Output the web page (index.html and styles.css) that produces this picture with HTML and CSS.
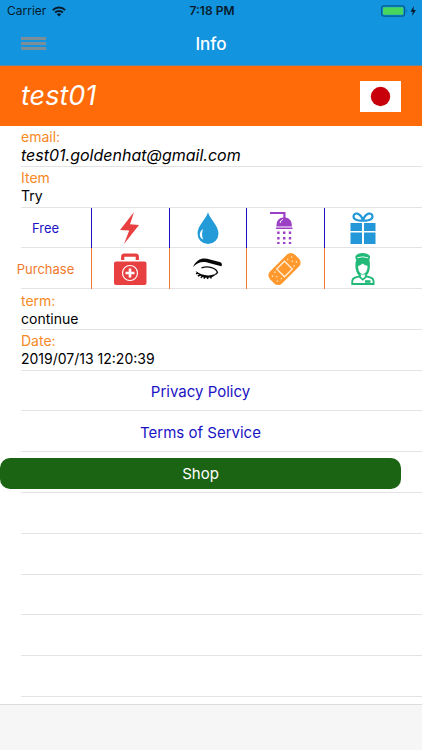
FILE: index.html
```html
<!DOCTYPE html>
<html lang="en">
<head>
<meta charset="utf-8">
<meta name="viewport" content="width=device-width, initial-scale=1">
<title>Info</title>
<link rel="stylesheet" href="styles.css">
</head>
<body>
<header class="top">
  <div class="status">
    <span class="carrier">Carrier
      <svg width="14" height="11" viewBox="0 0 14 11" aria-hidden="true"><g fill="none" stroke="#071b2b" stroke-width="2"><path d="M.8 4.1a8.8 8.8 0 0 1 12.4 0M3.1 6.5a5.5 5.5 0 0 1 7.8 0"/></g><path d="M4.8 8.3a3.1 3.1 0 0 1 4.4 0L7 10.6z" fill="#071b2b"/></svg>
    </span>
    <span class="clock">7:18 PM</span>
    <span class="power">
      <svg width="36" height="12" viewBox="0 0 36 12" aria-hidden="true"><rect x=".6" y=".8" width="23" height="10.4" rx="2.4" fill="none" stroke="#075b91" stroke-width="1.2"/><rect x="2" y="2.2" width="20.2" height="7.6" rx="1" fill="#47d65b"/><path d="M25 4.2q1.6 1.8 0 3.6z" fill="#075b91"/><path d="M32.8 1 29.5 6.7h2.3L31 11l4-5.9h-2.5z" fill="#071b2b"/></svg>
    </span>
  </div>
  <div class="nav">
    <button class="menu" type="button" aria-label="Menu"><span></span><span></span><span></span></button>
    <h1 class="nav-title">Info</h1>
  </div>
</header>
<section class="profile">
  <h2 class="name">test01</h2>
  <svg class="flag" width="41" height="31" viewBox="0 0 41 31" role="img" aria-label="Japan"><path fill="#fff" d="M0 0h41v31H0z"/><circle cx="20.5" cy="15.5" r="9.7" fill="#c7000b"/></svg>
</section>
<main class="list">
  <div class="row field"><span class="label">email:</span><span class="value email">test01.goldenhat@gmail.com</span></div>
  <div class="row field"><span class="label">Item</span><span class="value">Try</span></div>
  <div class="row items free">
    <span class="cell kind">Free</span>
    <span class="cell"><svg class="icon" viewBox="0 0 32 32"><path fill="#e83f40" d="M20 0 6 18l9.2.6L10 32l15-19-9-.8z"/></svg></span>
    <span class="cell"><svg class="icon" viewBox="0 0 32 32"><path fill="#239bd8" d="M16 0c1 6 10.500 13.500 10.500 21.500a10.500 10.500 0 0 1-21 0C5.500 13.500 15 6 16 0z"/><path fill="#fff" d="M11 17c-4.500 3-4 9 .3 10.600-1.800-3.600-1.400-7-.3-10.600z"/></svg></span>
    <span class="cell"><svg class="icon" viewBox="0 0 32 32"><g fill="#9b3fc5"><path d="M1 0h15.500v5.500a7 7 0 0 1 6.300 7.500v1.500H7.500V13a7 7 0 0 1 6.800-7.500V2H1zM7 15.500h16.500V17H7z"/><path d="M8.200 19.500h2.400v2.400H8.200zM14 19.500h2.400v2.400H14zM19.800 19.500h2.400v2.400h-2.400zM8.200 25h2.400v2.400H8.200zM14 25h2.400v2.400H14zM19.800 25h2.400v2.400h-2.400zM8.200 30h2.400v2H8.200zM14 30h2.400v2H14zM19.800 30h2.400v2h-2.400z"/></g><path d="M11 11q.4-2.600 2.800-3.500" fill="none" stroke="#fff" stroke-width="1"/></svg></span>
    <span class="cell"><svg class="icon" viewBox="0 0 32 32"><path fill="#2397d7" d="M3.500 11H15v8H3.500zM17 11h11.500v8H17zM3.500 20.500H15V32H3.500zM17 20.500h11.500V32H17z"/><path fill="none" stroke="#2397d7" stroke-width="2.200" d="M16 8.500C12 9 6.500 8 6.500 4.500 6.500 0 13.500 0 16 8.500zM16 8.500c4 .5 9.500-.5 9.500-4C25.500 0 18.500 0 16 8.500z"/></svg></span>
  </div>
  <div class="row items purchase">
    <span class="cell kind">Purchase</span>
    <span class="cell"><svg class="icon" viewBox="0 0 32 32"><path fill="none" stroke="#e83f40" stroke-width="3.200" d="M8.700 7V3.600q0-1.500 1.500-1.500h11.600q1.500 0 1.500 1.500V7"/><rect y="8.500" width="32.500" height="23.500" rx="2" fill="#e83f40"/><circle cx="16" cy="20" r="7.500" fill="none" stroke="#fff" stroke-width="1.200"/><path stroke="#fff" stroke-width="2.600" d="M16 15.500v9M11.500 20h9"/></svg></span>
    <span class="cell"><svg class="icon" viewBox="0 0 32 32"><path fill="#080808" d="M1 14C5 6 10.500 4.300 18 6.500l10.500 2.800q2.500 1.700.8 4L18 10.300C11 7.800 6.500 8.500 1 14z"/><path fill="#080808" d="M3.500 18c6 4.500 14 6 21.500 2.300-5 6.500-15.500 6.300-21.500-2.300z"/><path fill="none" stroke="#080808" stroke-width="1.300" d="M9.500 14.800c7-2.300 14.500.2 16 4.700l-2 2"/><path fill="none" stroke="#080808" stroke-width="1.500" d="m6 20-2 .8M8 22l-2.200 1.200M10.500 23.300l-1.700 1.500M13 24l-1.200 1.600M16 24l-.6 1.900M19 24v1.600"/></svg></span>
    <span class="cell"><svg class="icon" viewBox="0 0 32 32"><g transform="rotate(-45 15.500 16)"><rect x="-2" y="7.500" width="35" height="17" rx="5.500" fill="#ff982d"/><rect x="10" y="10.500" width="11" height="11" fill="none" stroke="#fff0dc" stroke-width="1.300"/><g fill="#ffe1b9"><circle cx="2" cy="12.500" r=".8"/><circle cx="2" cy="19.500" r=".8"/><circle cx="4.500" cy="16" r=".8"/><circle cx="6.500" cy="11.500" r=".8"/><circle cx="6.500" cy="20.500" r=".8"/><circle cx="24.500" cy="11.500" r=".8"/><circle cx="24.500" cy="20.500" r=".8"/><circle cx="26.500" cy="16" r=".8"/><circle cx="29" cy="12.500" r=".8"/><circle cx="29" cy="19.500" r=".8"/></g></g></svg></span>
    <span class="cell"><svg class="icon" viewBox="0 0 32 32"><path fill="#20b978" d="M9.300 7C8.500 5.500 8 4.500 8.500 3.200 9.500 1 12.500 0 15.500 0s6.500 1 7.500 3.200c.4 1.300-.2 2.300-.8 3.800 1 2 1 8-.2 11.500-.8 3-3.200 5-6.300 5s-5.500-2-6.300-5C8 15 8.200 9 9.300 7z"/><path d="M10.300 4.800q5.200-2 11 0" fill="none" stroke="#fff" stroke-width=".9"/><path fill="#fff" d="M11.200 13c1.800-.3 3.300-1.200 4.300-2.400 1.500 1.200 3 1.900 5 2.200.2 4.400-1.600 8.200-4.700 8.200s-4.800-3.700-4.600-8z"/><path fill="#fff" stroke="#20b978" stroke-width="1.800" d="M13 21.500V23l-5 1.700q-2.800 1-2.800 4V31h21.400v-2.300q0-3-2.800-4l-5-1.700v-1.500"/><path fill="none" stroke="#20b978" stroke-width="1.700" d="m12 23.300 3.800 3.300 3.800-3.300"/><path fill="#20b978" d="M18 27.200h5.500v2.600H18z"/></svg></span>
  </div>
  <div class="row field"><span class="label">term:</span><span class="value">continue</span></div>
  <div class="row field"><span class="label">Date:</span><span class="value">2019/07/13 12:20:39</span></div>
  <div class="row action"><a class="link" href="#privacy">Privacy Policy</a></div>
  <div class="row action"><a class="link" href="#terms">Terms of Service</a></div>
  <div class="row action"><button class="shop" type="button">Shop</button></div>
  <div class="row"></div>
  <div class="row"></div>
  <div class="row"></div>
  <div class="row"></div>
  <div class="row"></div>
</main>
<footer class="toolbar"></footer>
</body>
</html>
```
FILE: styles.css
```css
* { box-sizing: border-box; }

body {
  margin: 0;
  min-height: 100vh;
  display: flex;
  flex-direction: column;
  background: #fff;
  color: #000;
  font-family: Inter, "Liberation Sans", sans-serif;
  font-size: 14px;
  line-height: 18px;
}

h1, h2 { margin: 0; }

button {
  border: 0;
  padding: 0;
  font: inherit;
}

.top {
  background: #1394df;
  border-bottom: 1px solid #5f88a0;
}

.status {
  display: grid;
  grid-template-columns: 1fr auto 1fr;
  align-items: center;
  height: 22px;
  padding: 0 5px 0 7px;
  color: #071b2b;
  font-size: 12px;
}

.carrier {
  display: flex;
  align-items: center;
  gap: 6px;
}

.clock { font-weight: 600; }

.power {
  display: flex;
  justify-content: flex-end;
}

.nav {
  display: grid;
  grid-template-columns: 1fr auto 1fr;
  align-items: center;
  height: 43px;
  padding: 0 21px;
}

.menu {
  display: flex;
  flex-direction: column;
  gap: 2px;
  width: 25px;
  background: none;
}

.menu span {
  height: 3px;
  background: #7c8f99;
}

.nav-title {
  color: #fff;
  font-size: 17px;
  font-weight: 500;
  line-height: 22px;
}

.profile {
  display: flex;
  align-items: center;
  justify-content: space-between;
  height: 60px;
  padding: 0 21px;
  background: #ff6b08;
}

.name {
  color: #fff;
  font-size: 27px;
  font-style: italic;
  font-weight: 400;
  line-height: 34px;
}

.list {
  flex: 1;
  display: grid;
  grid-template-rows: repeat(14, minmax(40px, 1fr));
  padding-bottom: 7px;
}

/* Row divider, inset from the left edge */
.row {
  background: linear-gradient(#e3e3e5, #e3e3e5) 21px 100% / 100% 1px no-repeat;
}

.field {
  display: flex;
  flex-direction: column;
  justify-content: center;
  padding: 0 21px;
}

.label { color: #f58a24; }

.email {
  font-size: 16px;
  font-style: italic;
}

.items {
  display: grid;
  grid-template-columns: 91px repeat(4, 1fr);
  padding-right: 21px;
}

.cell {
  display: flex;
  align-items: center;
  justify-content: center;
}

.cell + .cell { border-left: 1px solid; }

.free { color: #1a13c4; }

.purchase { color: #f0792b; }

.kind { font-size: 13px; }

.icon {
  width: 32px;
  height: 32px;
  overflow: visible;
}

.action {
  display: flex;
  align-items: center;
  justify-content: center;
  padding: 2px 21px 0 0;
  font-size: 15px;
}

.link {
  color: #1a13c4;
  text-decoration: none;
}

.shop {
  width: 100%;
  height: 31px;
  border-radius: 10px;
  background: #1b6414;
  color: #fff;
}

.toolbar {
  height: 46px;
  border-top: 1px solid #dcdcdc;
  background: #f6f6f6;
}
```
